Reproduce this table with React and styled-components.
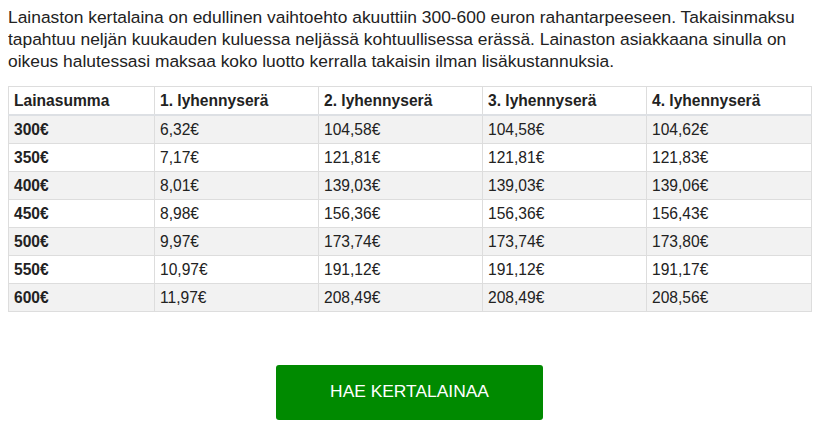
import React from "react";
import styled, { createGlobalStyle } from "styled-components";

const GlobalStyle = createGlobalStyle`
  body {
    margin: 8px;
    background: #fff;
    font-family: "Liberation Sans", Arial, sans-serif;
    color: #222;
  }
`;

const rows = [
  ["300€", "6,32€", "104,58€", "104,58€", "104,62€"],
  ["350€", "7,17€", "121,81€", "121,81€", "121,83€"],
  ["400€", "8,01€", "139,03€", "139,03€", "139,06€"],
  ["450€", "8,98€", "156,36€", "156,36€", "156,43€"],
  ["500€", "9,97€", "173,74€", "173,74€", "173,80€"],
  ["550€", "10,97€", "191,12€", "191,12€", "191,17€"],
  ["600€", "11,97€", "208,49€", "208,49€", "208,56€"],
];

const headers = [
  "Lainasumma",
  "1. lyhennyserä",
  "2. lyhennyserä",
  "3. lyhennyserä",
  "4. lyhennyserä",
];

const colWidths = [146, 164, 164, 164, 165];

const Wrapper = styled.div`
  width: 803px;
  display: flex;
  flex-direction: column;
`;

const Intro = styled.p`
  margin: 0;
  margin-top: -2px;
  font-size: 17.4px;
  line-height: 22px;
  color: #222;
`;

const Table = styled.table`
  margin-top: 14px;
  width: 803px;
  border-collapse: collapse;
  table-layout: fixed;
  font-size: 15.6px;
`;

const Col = styled.col`
  width: ${({ $w }) => $w}px;
`;

const Row = styled.tr`
  background: ${({ $odd }) => ($odd ? "#f2f2f2" : "#fff")};
`;

const HeadCell = styled.th`
  height: 27px;
  padding: 0 5px;
  text-align: left;
  font-weight: bold;
  border: 1px solid #dddddd;
  border-bottom: 2px solid #dde0e4;
  color: #222;
`;

const Cell = styled.td`
  height: 27px;
  padding: 0 5px;
  border: 1px solid #dddddd;
  font-weight: ${({ $bold }) => ($bold ? "bold" : "normal")};
  color: #222;
`;

const ButtonRow = styled.div`
  display: flex;
  justify-content: center;
  margin-top: 53px;
`;

const Button = styled.button`
  width: 267px;
  height: 55px;
  padding: 0 0 2px;
  border: none;
  border-radius: 3px;
  background: #008a00;
  color: #fff;
  font-family: "Liberation Sans", Arial, sans-serif;
  font-size: 17.4px;
  cursor: pointer;
`;

const App = () => {
  return (
    <Wrapper>
      <GlobalStyle />
      <Intro>
        Lainaston kertalaina on edullinen vaihtoehto akuuttiin 300-600 euron
        rahantarpeeseen. Takaisinmaksu tapahtuu neljän kuukauden kuluessa
        neljässä kohtuullisessa erässä. Lainaston asiakkaana sinulla on oikeus
        halutessasi maksaa koko luotto kerralla takaisin ilman
        lisäkustannuksia.
      </Intro>
      <Table>
        <colgroup>
          {colWidths.map((w, i) => (
            <Col key={i} $w={w} />
          ))}
        </colgroup>
        <thead>
          <Row>
            {headers.map((h) => (
              <HeadCell key={h}>{h}</HeadCell>
            ))}
          </Row>
        </thead>
        <tbody>
          {rows.map((r, i) => (
            <Row key={r[0]} $odd={i % 2 === 0}>
              {r.map((v, j) => (
                <Cell key={j} $bold={j === 0}>
                  {v}
                </Cell>
              ))}
            </Row>
          ))}
        </tbody>
      </Table>
      <ButtonRow>
        <Button>HAE KERTALAINAA</Button>
      </ButtonRow>
    </Wrapper>
  );
};

export default App;
